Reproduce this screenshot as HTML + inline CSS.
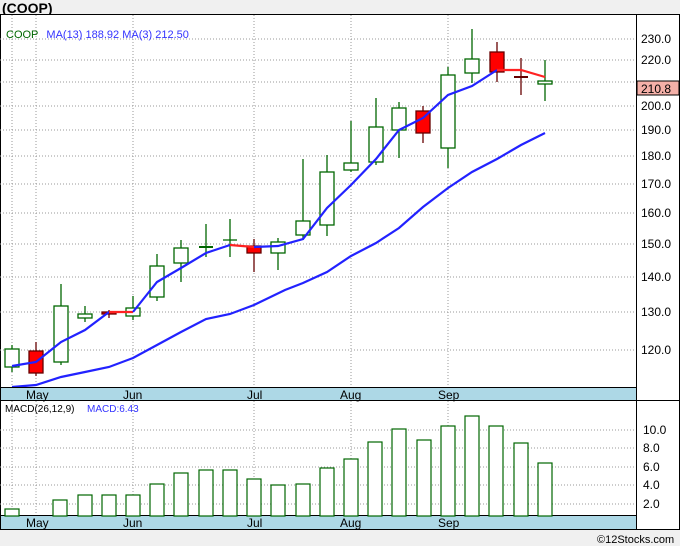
<!DOCTYPE html>
<html><head><meta charset="utf-8"><style>
html,body{margin:0;padding:0;background:#f0f0f0;width:680px;height:546px;overflow:hidden}
svg{display:block;font-family:"Liberation Sans","DejaVu Sans",sans-serif}
</style></head><body>
<svg width="680" height="546" viewBox="0 0 680 546" xmlns="http://www.w3.org/2000/svg">
<rect x="0" y="0" width="680" height="546" fill="#f0f0f0"/>
<text x="2" y="13" font-size="14" font-weight="bold" fill="#000">(COOP)</text>
<rect x="0.5" y="14.5" width="679" height="515" fill="#fff" stroke="#000"/>
<!-- grid -->
<g stroke="#999" stroke-dasharray="1,2" stroke-width="1">
<line x1="12" y1="15" x2="12" y2="387"/><line x1="36" y1="15" x2="36" y2="387"/><line x1="133" y1="15" x2="133" y2="387"/><line x1="254" y1="15" x2="254" y2="387"/><line x1="351" y1="15" x2="351" y2="387"/><line x1="448" y1="15" x2="448" y2="387"/>
<line x1="12" y1="401" x2="12" y2="515"/><line x1="36" y1="401" x2="36" y2="515"/><line x1="133" y1="401" x2="133" y2="515"/><line x1="254" y1="401" x2="254" y2="515"/><line x1="351" y1="401" x2="351" y2="515"/><line x1="448" y1="401" x2="448" y2="515"/>
<line x1="0" y1="39" x2="636" y2="39"/><line x1="0" y1="60" x2="636" y2="60"/><line x1="0" y1="82" x2="636" y2="82"/><line x1="0" y1="106" x2="636" y2="106"/><line x1="0" y1="130" x2="636" y2="130"/><line x1="0" y1="156" x2="636" y2="156"/><line x1="0" y1="184" x2="636" y2="184"/><line x1="0" y1="213" x2="636" y2="213"/><line x1="0" y1="244" x2="636" y2="244"/><line x1="0" y1="277" x2="636" y2="277"/><line x1="0" y1="312" x2="636" y2="312"/><line x1="0" y1="350" x2="636" y2="350"/>
<line x1="0" y1="430" x2="636" y2="430"/><line x1="0" y1="448" x2="636" y2="448"/><line x1="0" y1="467" x2="636" y2="467"/><line x1="0" y1="485" x2="636" y2="485"/><line x1="0" y1="504" x2="636" y2="504"/>
</g>
<text x="6" y="38" font-size="11" fill="#060"><tspan>COOP</tspan><tspan fill="#33f" dx="8">MA(13)  188.92  MA(3)  212.50</tspan></text>
<!-- candles -->
<g stroke-width="1.3">
<g stroke="#060" fill="#fff">
<line x1="12" y1="345" x2="12" y2="372"/><rect x="5" y="349" width="14" height="18"/>
<line x1="61" y1="284" x2="61" y2="365"/><rect x="54" y="306" width="14" height="56"/>
<line x1="85" y1="306" x2="85" y2="322"/><rect x="78" y="314" width="14" height="4"/>
<line x1="133" y1="296" x2="133" y2="320"/><rect x="126" y="308" width="14" height="8"/>
<line x1="157" y1="254" x2="157" y2="301"/><rect x="150" y="266" width="14" height="31"/>
<line x1="181" y1="240" x2="181" y2="282"/><rect x="174" y="248" width="14" height="15"/>
<line x1="206" y1="224" x2="206" y2="257"/><line x1="199" y1="247" x2="213" y2="247" stroke-width="2"/>
<line x1="230" y1="219" x2="230" y2="257"/><line x1="223" y1="240" x2="237" y2="240"/>
<line x1="278" y1="238" x2="278" y2="270"/><rect x="271" y="242" width="14" height="11"/>
<line x1="303" y1="159" x2="303" y2="240"/><rect x="296" y="221" width="14" height="14"/>
<line x1="327" y1="155" x2="327" y2="236"/><rect x="320" y="172" width="14" height="53"/>
<line x1="351" y1="121" x2="351" y2="172"/><rect x="344" y="163" width="14" height="7"/>
<line x1="376" y1="98" x2="376" y2="165"/><rect x="369" y="127" width="14" height="35"/>
<line x1="399" y1="102" x2="399" y2="158"/><rect x="392" y="108" width="14" height="22"/>
<line x1="448" y1="67" x2="448" y2="168"/><rect x="441" y="75" width="14" height="73"/>
<line x1="472" y1="29" x2="472" y2="83"/><rect x="465" y="59" width="14" height="14"/>
<line x1="545" y1="60" x2="545" y2="101"/><rect x="538" y="81" width="14" height="3"/>
</g>
<g stroke="#600" fill="#f00">
<line x1="36" y1="342" x2="36" y2="376"/><rect x="29" y="351" width="14" height="22"/>
<line x1="109" y1="310" x2="109" y2="318"/><rect x="102" y="312" width="14" height="2"/>
<line x1="254" y1="239" x2="254" y2="272"/><rect x="247" y="246" width="14" height="7"/>
<line x1="423" y1="106" x2="423" y2="143"/><rect x="416" y="111" width="14" height="22"/>
<line x1="497" y1="42" x2="497" y2="82"/><rect x="490" y="52" width="14" height="20"/>
<line x1="521" y1="58" x2="521" y2="95"/><line x1="514" y1="77" x2="528" y2="77" stroke-width="2"/>
</g>
</g>
<!-- MAs -->
<g fill="none" stroke-width="2.2">
<polyline stroke="#22f" points="12,387 36,385 61,377 85,372 109,367 133,358 157,345 181,332 206,319 230,314 254,305 285,290 303,283 327,272 351,256 376,243 399,228 423,207 448,188 472,172 497,159 521,145 545,133"/>
<polyline stroke="#22f" points="12,366 36,362 61,342 85,330 109,312"/>
<polyline stroke="#f22" points="109,312 133,312"/>
<polyline stroke="#22f" points="133,312 157,282 181,268 206,253 230,245"/>
<polyline stroke="#f22" points="230,245 254,247"/>
<polyline stroke="#22f" points="254,247 278,246 303,239 327,208 351,185 376,159 399,130 423,118 448,95 472,86 497,70"/>
<polyline stroke="#f22" points="497,70 521,70 545,77"/>
</g>
<!-- bands -->
<rect x="0.5" y="387.5" width="636" height="13" fill="#add8e6" stroke="#000"/>
<rect x="0.5" y="515.5" width="636" height="14" fill="#add8e6" stroke="#000"/>
<g font-size="12" fill="#000">
<text x="26" y="399">May</text><text x="123" y="399">Jun</text><text x="247" y="399">Jul</text><text x="340" y="399">Aug</text><text x="438" y="399">Sep</text>
<text x="26" y="527">May</text><text x="123" y="527">Jun</text><text x="247" y="527">Jul</text><text x="340" y="527">Aug</text><text x="438" y="527">Sep</text>
</g>
<line x1="636.5" y1="15" x2="636.5" y2="530" stroke="#000"/>
<!-- axis -->
<g font-size="12" fill="#000">
<text x="641" y="43">230.0</text><text x="641" y="64">220.0</text><text x="641" y="110">200.0</text><text x="641" y="134">190.0</text><text x="641" y="160">180.0</text><text x="641" y="188">170.0</text><text x="641" y="217">160.0</text><text x="641" y="248">150.0</text><text x="641" y="281">140.0</text><text x="641" y="316">130.0</text><text x="641" y="354">120.0</text>
<text x="643" y="434">10.0</text><text x="643" y="452">8.0</text><text x="643" y="471">6.0</text><text x="643" y="489">4.0</text><text x="643" y="508">2.0</text>
</g>
<rect x="637" y="81" width="42" height="14" fill="#f4b0a8" stroke="#000"/>
<text x="641" y="93" font-size="12" fill="#000">210.8</text>
<!-- MACD -->
<text x="5" y="412" font-size="10" fill="#000">MACD(26,12,9)</text>
<text x="87" y="412" font-size="10" fill="#33f">MACD:6.43</text>
<g fill="#fff" stroke="#060" stroke-width="1.2">
<rect x="5" y="509" width="14" height="7"/><rect x="53" y="500" width="14" height="16"/><rect x="78" y="495" width="14" height="21"/><rect x="102" y="495" width="14" height="21"/><rect x="126" y="495" width="14" height="21"/><rect x="150" y="484" width="14" height="32"/><rect x="174" y="473" width="14" height="43"/><rect x="199" y="470" width="14" height="46"/><rect x="223" y="470" width="14" height="46"/><rect x="247" y="479" width="14" height="37"/><rect x="271" y="485" width="14" height="31"/><rect x="296" y="484" width="14" height="32"/><rect x="320" y="468" width="14" height="48"/><rect x="344" y="459" width="14" height="57"/><rect x="368" y="442" width="14" height="74"/><rect x="392" y="429" width="14" height="87"/><rect x="417" y="440" width="14" height="76"/><rect x="441" y="426" width="14" height="90"/><rect x="465" y="416" width="14" height="100"/><rect x="489" y="426" width="14" height="90"/><rect x="514" y="443" width="14" height="73"/><rect x="538" y="463" width="14" height="53"/>
</g>
<line x1="0" y1="400.5" x2="680" y2="400.5" stroke="#000"/>
<rect x="0" y="531" width="680" height="15" fill="#f0f0f0"/>
<text x="597" y="543" font-size="11" fill="#000">©12Stocks.com</text>
</svg>
</body></html>
